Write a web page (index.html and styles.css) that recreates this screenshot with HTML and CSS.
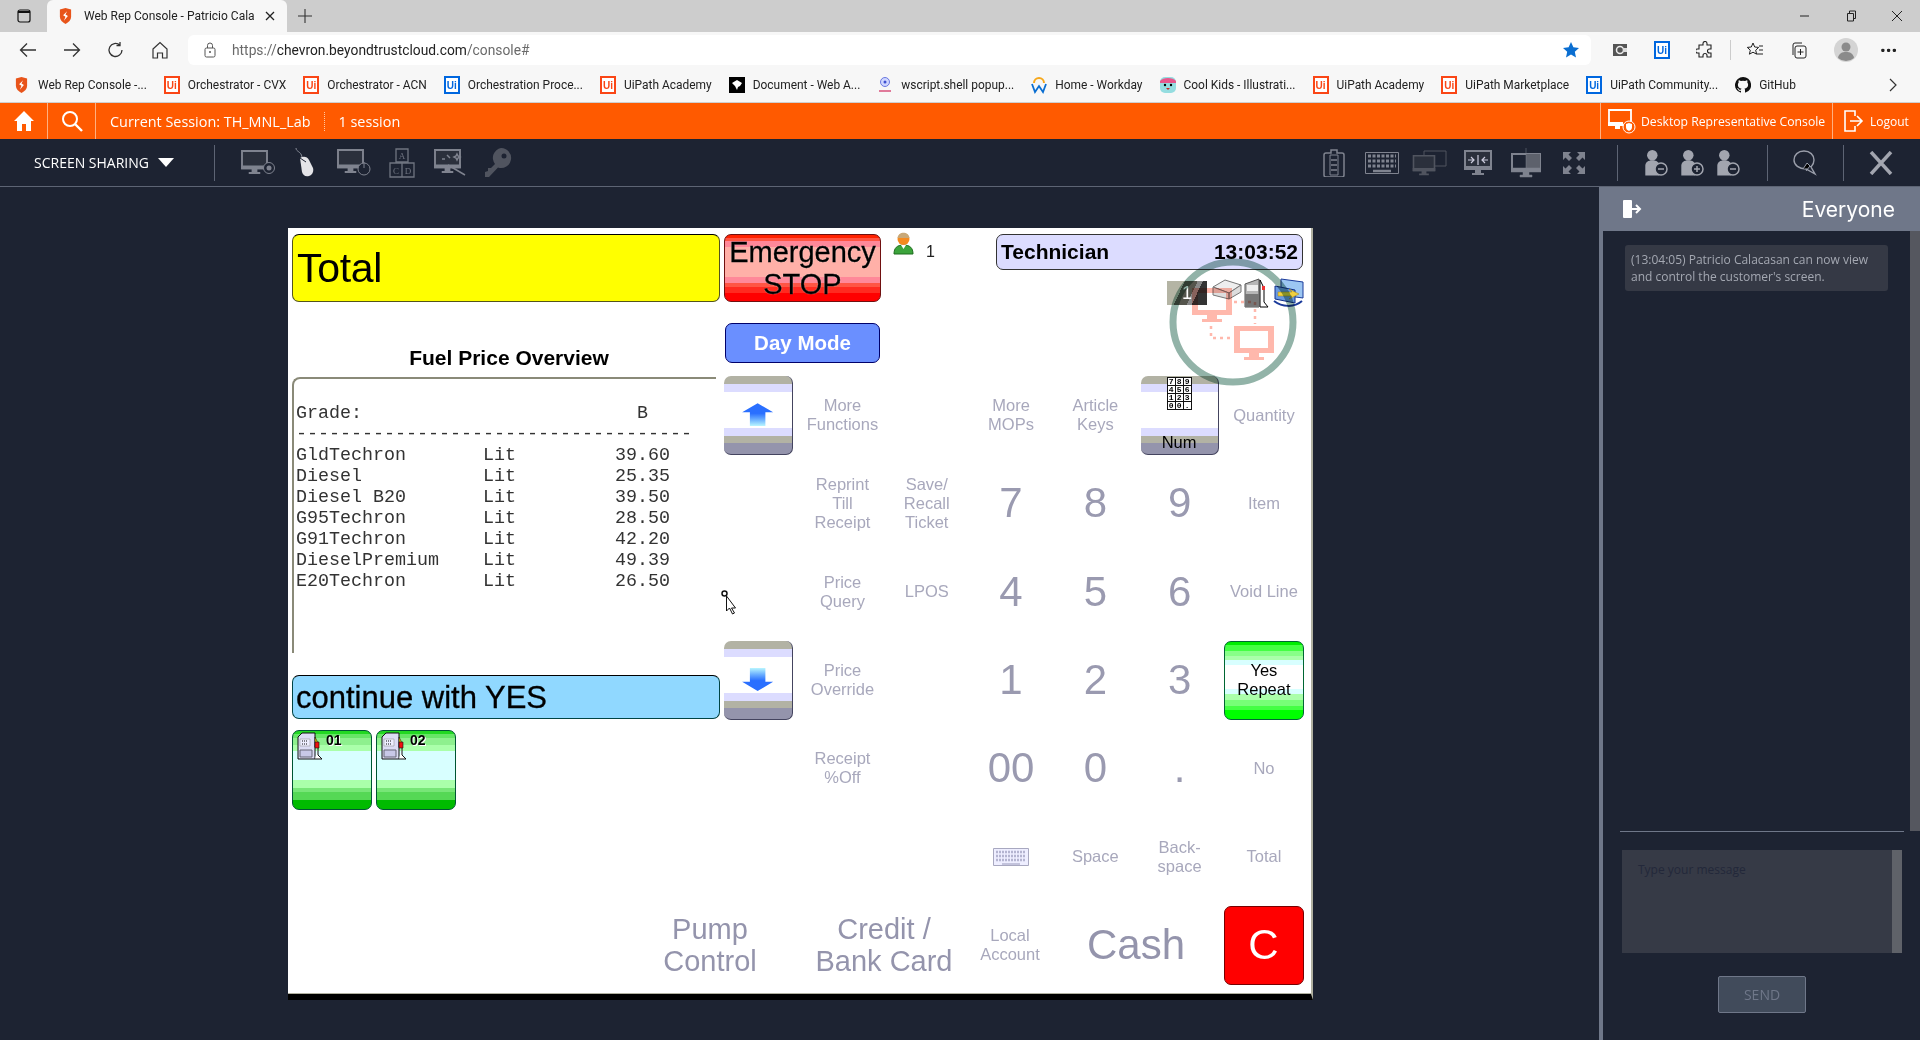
FILE: index.html
```html
<!DOCTYPE html>
<html>
<head>
<meta charset="utf-8">
<title>Web Rep Console</title>
<link rel="stylesheet" href="styles.css">
</head>
<body>

<svg class="defs">
  <symbol id="shield" viewBox="0 0 16 20"><path d="M8 0l7 2v9c0 4-3 7-7 9-4-2-7-5-7-9V2z" fill="#e8541a"/><path d="M10 4L5 9l3 2-2 5 5-6-3-2z" fill="#fff"/></symbol>
  <symbol id="monitor" viewBox="0 0 28 26"><path d="M1 1h26v18H1z" fill="#2b303c" stroke="currentColor" stroke-width="2"/><path d="M0 16h28v4H0zM11 20h6v3h3v2H8v-2h3z" fill="currentColor"/></symbol>
  <symbol id="person" viewBox="0 0 24 40"><circle cx="11" cy="9" r="7.5" fill="currentColor"/><path d="M1 38V24c0-5 4-8 10-8s10 3 10 8v14z" fill="currentColor"/></symbol>
  <symbol id="pump" viewBox="0 0 26 29">
    <path d="M1 5l4-4h13v26H1z" fill="#dcdcf4" stroke="#111"/><path d="M3 7h10v7H3z" fill="#eef" stroke="#888" stroke-width=".5"/>
    <path d="M5 9h5M5 12h5" stroke="#111" stroke-dasharray="1 1"/><path d="M3 18h12v7H3z" fill="#c8c8e8" stroke="#667"/>
    <path d="M18 5l3 6-3 4z" fill="#ffd800" stroke="#111" stroke-width=".6"/><path d="M18 10h4v6h-4z" fill="#f01010" stroke="#111" stroke-width=".6"/>
    <path d="M21 16v7l4 4h-7" fill="#fff" stroke="#111"/>
  </symbol>
</svg>

<div class="tabstrip">
  <svg class="tab-panes" width="14" height="14" viewBox="0 0 14 14"><rect x="1" y="1" width="12" height="12" rx="2" fill="none" stroke="#111" stroke-width="1.2"/><path d="M1 4h12V2H1z" fill="#111"/></svg>
  <div class="tab">
    <svg class="favicon" width="13" height="16"><use href="#shield"/></svg>
    <span class="tab-title">Web Rep Console - Patricio Cala</span>
    <svg class="tab-close" width="10" height="10" viewBox="0 0 10 10"><path d="M1 1l8 8M9 1L1 9" stroke="#222" stroke-width="1.3"/></svg>
  </div>
  <svg class="tab-new" width="14" height="14" viewBox="0 0 14 14"><path d="M7 0v14M0 7h14" stroke="#333" stroke-width="1.1"/></svg>
  <div class="win-btns">
    <svg width="12" height="12" viewBox="0 0 12 12"><path d="M1 6h9" stroke="#222"/></svg>
    <svg width="12" height="12" viewBox="0 0 12 12"><path d="M2.5 3.5h6V11h-6zM4.500 3V1h6v7.500H9" fill="none" stroke="#222"/></svg>
    <svg width="12" height="12" viewBox="0 0 12 12"><path d="M1 1l10 10M11 1L1 11" stroke="#222"/></svg>
  </div>
</div>

<div class="addrbar">
  <button class="nav"><svg width="18" height="16" viewBox="0 0 18 16"><path d="M17 8H2M8 1.5L1.5 8 8 14.5" fill="none" stroke="#333" stroke-width="1.3"/></svg></button>
  <button class="nav"><svg width="18" height="16" viewBox="0 0 18 16"><path d="M1 8h15M10 1.5L16.5 8 10 14.5" fill="none" stroke="#333" stroke-width="1.3"/></svg></button>
  <button class="nav"><svg width="18" height="18" viewBox="0 0 18 18"><path d="M15 9a6.5 6.5 0 1 1-2.200-4.900M13 1v3.500H9.500" fill="none" stroke="#333" stroke-width="1.3"/></svg></button>
  <button class="nav"><svg width="18" height="18" viewBox="0 0 18 18"><path d="M2 8l7-6.500L16 8v9h-4.500v-5h-5v5H2z" fill="none" stroke="#333" stroke-width="1.2"/></svg></button>
  <div class="omnibox">
    <svg class="lock" width="12" height="16" viewBox="0 0 12 16"><rect x="1" y="6" width="10" height="9" rx="1.5" fill="none" stroke="#555"/><path d="M3.5 6V3.500a2.500 2.500 0 0 1 5 0V6" fill="none" stroke="#555"/><circle cx="6" cy="10" r="1" fill="#555"/></svg>
    <span class="url"><i>https://</i>chevron.beyondtrustcloud.com<i>/console#</i></span>
    <svg class="star" width="18" height="18" viewBox="0 0 18 18"><path d="M9 1l2.400 5.300 5.600.6-4.200 3.800 1.200 5.700L9 13.500 4 16.400l1.200-5.700L1 6.900l5.600-.6z" fill="#0a6ed1"/></svg>
  </div>
  <div class="ext-icons">
    <svg width="16" height="18" viewBox="0 0 16 18"><path d="M1 3h14v12H1z" fill="#555"/><circle cx="8" cy="9" r="3.5" fill="none" stroke="#eee" stroke-width="1.5"/><path d="M11 7h4v4h-4z" fill="#ddd"/></svg>
    <span class="ui-logo ui-blue">Ui</span>
    <svg width="18" height="18" viewBox="0 0 18 18"><path d="M7 2.500a2 2 0 0 1 4 0V4h4v4h-1.500a2 2 0 0 0 0 4H15v4h-4v-1.500a2 2 0 0 0-4 0V16H3v-4H1.500a2 2 0 0 1 0-4H3V4h4z" fill="none" stroke="#222" stroke-width="1.1"/></svg>
    <span class="ext-sep"></span>
    <svg width="18" height="18" viewBox="0 0 18 18"><path d="M7 2l1.700 4 4 .4-3 2.800.9 4L7 11.200l-3.600 2 .9-4-3-2.800 4-.4z" fill="none" stroke="#222"/><path d="M13 5h4M13 9h4M11 13h6" stroke="#222"/></svg>
    <svg width="18" height="18" viewBox="0 0 18 18"><rect x="5" y="5" width="11" height="12" rx="2" fill="none" stroke="#222"/><path d="M3 14V4a2 2 0 0 1 2-2h7M10.500 8v6M7.500 11h6" fill="none" stroke="#222"/></svg>
    <svg class="avatar" width="24" height="24" viewBox="0 0 24 24"><circle cx="12" cy="12" r="12" fill="#d4d4d4"/><circle cx="12" cy="9" r="4.5" fill="#8b8b8b"/><path d="M4 20c1-5 4-6 8-6s7 1 8 6a12 12 0 0 1-16 0z" fill="#8b8b8b"/></svg>
    <span class="dots">&middot;&middot;&middot;</span>
  </div>
</div>

<div class="bookmarks">
  <a class="bm bm-first"><svg width="13" height="16"><use href="#shield"/></svg>Web Rep Console -...</a>
  <a class="bm"><span class="ui-logo">Ui</span>Orchestrator - CVX</a>
  <a class="bm"><span class="ui-logo">Ui</span>Orchestrator - ACN</a>
  <a class="bm"><span class="ui-logo ui-blue">Ui</span>Orchestration Proce...</a>
  <a class="bm"><span class="ui-logo">Ui</span>UiPath Academy</a>
  <a class="bm"><svg width="16" height="16" viewBox="0 0 16 16"><path d="M0 0h16v16H0z" fill="#000"/><path d="M3 6l5-3 5 3-2 3-2 1-1 3-2-4z" fill="#fff"/></svg>Document - Web A...</a>
  <a class="bm"><svg width="16" height="18" viewBox="0 0 16 18"><circle cx="8" cy="6" r="4.5" fill="#cfd6ff" stroke="#6a78e0"/><circle cx="8" cy="6" r="1.5" fill="#3d4fd0"/><path d="M2 15h12" stroke="#e07a9a" stroke-width="2"/></svg>wscript.shell popup...</a>
  <a class="bm"><svg width="16" height="18" viewBox="0 0 16 18"><path d="M3 7a5 5 0 0 1 10 0" fill="none" stroke="#f6a81c" stroke-width="2"/><path d="M1 8l3 8 4-6 4 6 3-8" fill="none" stroke="#0a6ed1" stroke-width="1.8"/></svg>Home - Workday</a>
  <a class="bm"><svg width="16" height="18" viewBox="0 0 16 18"><rect y="1" width="16" height="16" rx="5" fill="#95dde0"/><path d="M0 5c3-4 13-4 16 0v2H0z" fill="#e8578c"/><circle cx="5" cy="9" r="1.2"/><circle cx="11" cy="9" r="1.2"/><path d="M6 12h4l-2 2z" fill="#c22"/></svg>Cool Kids - Illustrati...</a>
  <a class="bm"><span class="ui-logo">Ui</span>UiPath Academy</a>
  <a class="bm"><span class="ui-logo">Ui</span>UiPath Marketplace</a>
  <a class="bm"><span class="ui-logo ui-blue">Ui</span>UiPath Community...</a>
  <a class="bm"><svg width="16" height="16" viewBox="0 0 16 16"><path d="M8 0a8 8 0 0 0-2.500 15.600c.4.100.5-.2.500-.4v-1.400c-2.200.5-2.700-1-2.700-1-.4-.9-.9-1.200-.9-1.200-.7-.5.100-.5.100-.5.800.1 1.200.8 1.200.8.700 1.200 1.900.9 2.300.7.100-.5.300-.9.500-1.100-1.800-.2-3.600-.9-3.600-4 0-.9.300-1.600.8-2.100-.1-.2-.4-1 .100-2.100 0 0 .7-.2 2.200.8a7.600 7.600 0 0 1 4 0c1.500-1 2.200-.8 2.200-.8.400 1.100.2 1.900.1 2.100.5.600.8 1.300.8 2.100 0 3.100-1.900 3.800-3.700 4 .3.300.6.800.6 1.500v2.200c0 .2.100.5.600.4A8 8 0 0 0 8 0z" fill="#111"/></svg>GitHub</a>
  <svg class="bm-more" width="10" height="14" viewBox="0 0 10 14"><path d="M2 1l6 6-6 6" fill="none" stroke="#333" stroke-width="1.2"/></svg>
</div>

<div class="orangebar">
  <div class="ob-cell ob-home"><svg width="22" height="22" viewBox="0 0 22 22"><path d="M11 1l10 10h-3v10h-5v-7H9v7H4V11H1z" fill="#fff"/></svg></div>
  <div class="ob-cell ob-search"><svg width="22" height="22" viewBox="0 0 22 22"><circle cx="9" cy="9" r="7" fill="none" stroke="#fff" stroke-width="2"/><path d="M14 14l7 7" stroke="#fff" stroke-width="2.4"/></svg></div>
  <span class="ob-session">Current Session: TH_MNL_Lab</span>
  <span class="ob-count">1 session</span>
  <div class="ob-cell ob-desktop">
    <svg width="28" height="26" viewBox="0 0 28 26"><path d="M1 2h22v15H1z" fill="none" stroke="#fff" stroke-width="1.8"/><path d="M0 14h15v4H0zM7 18h5v3H7z" fill="#fff"/><circle cx="21" cy="19" r="6" fill="#ff5a00" stroke="#fff"/><path d="M21 15l3 1v3c0 2-1 3-3 4-2-1-3-2-3-4v-3z" fill="#fff"/></svg>
    <span>Desktop Representative Console</span>
  </div>
  <div class="ob-cell ob-logout">
    <svg width="20" height="22" viewBox="0 0 20 22"><path d="M11 6V1H1v20h10v-5" fill="none" stroke="#fff" stroke-width="1.6"/><path d="M6 11h12M13 6l5 5-5 5" fill="none" stroke="#fff" stroke-width="1.6"/></svg>
    <span>Logout</span>
  </div>
</div>

<div class="toolbar">
  <div class="tb-mode">SCREEN SHARING<span class="caret"></span></div>
  <span class="tb-sep"></span>
  <div class="tb-group tb-left">
    <span class="tb-icon"><svg width="34" height="26" viewBox="0 0 34 26"><use href="#monitor" width="27" height="25"/><circle cx="28" cy="18" r="5.5" fill="#1d2332" stroke="currentColor"/><circle cx="28" cy="18" r="2.5" fill="currentColor"/></svg></span>
    <span class="tb-icon tb-bright"><svg width="22" height="30" viewBox="0 0 22 30"><path d="M1 0c0 4 5 3 6 9" fill="none" stroke="#8a8e9a"/><path d="M5 10c3-2 7-2 9 2l4 8c1 4-1 7-4 8-4 1-6-1-7-4z" fill="currentColor"/><path d="M5 10l6 4" stroke="#1d2332"/></svg></span>
    <span class="tb-icon"><svg width="34" height="28" viewBox="0 0 34 28"><use href="#monitor" width="27" height="25"/><circle cx="27" cy="20" r="6" fill="#1d2332" stroke="currentColor"/><path d="M27 13v6" stroke="currentColor"/></svg></span>
    <span class="tb-icon tb-mid"><svg class="abcd" width="26" height="30" viewBox="0 0 26 30"><path d="M7 1h12v13H7zM1 15h12v14H1zM13 15h12v14H13z" fill="none" stroke="currentColor" stroke-width="1.3"/><text x="13" y="11" text-anchor="middle">A</text><text x="7" y="26" text-anchor="middle">C</text><text x="19" y="26" text-anchor="middle">D</text></svg></span>
    <span class="tb-icon"><svg width="32" height="28" viewBox="0 0 32 28"><use href="#monitor" width="27" height="25"/><path d="M14 16L31 26M23 5l1 2 2 1-2 1-1 2-1-2-2-1 2-1zM13 6l3 3M8 10h3" stroke="currentColor" stroke-width="1.5" fill="none"/></svg></span>
    <span class="tb-icon tb-dim"><svg width="28" height="30" viewBox="0 0 28 30"><path d="M17 0a10 10 0 1 1-3 19.500L5 29H1v-5l3-1v-3h3l4-4A10 10 0 0 1 17 0z" fill="currentColor"/><circle cx="20" cy="8" r="2.5" fill="#1d2332"/></svg></span>
  </div>
  <div class="tb-group tb-right">
    <span class="tb-icon"><svg width="22" height="28" viewBox="0 0 22 28"><path d="M8 1h6v3h5a2 2 0 0 1 2 2v20a2 2 0 0 1-2 2H3a2 2 0 0 1-2-2V6a2 2 0 0 1 2-2h5z" fill="none" stroke="currentColor" stroke-width="1.5"/><path d="M7 6h8v20H7z" fill="none" stroke="currentColor"/><path d="M8 11h6M8 16h6M8 21h6" stroke="currentColor" stroke-width="1.5"/></svg></span>
    <span class="tb-icon"><svg width="34" height="22" viewBox="0 0 34 22"><path d="M.5.5h33v21H.5z" fill="none" stroke="currentColor"/><path d="M3 4h28M3 9h28M3 14h28" stroke="currentColor" stroke-width="3" stroke-dasharray="3 1.5"/><path d="M8 19h18" stroke="currentColor" stroke-width="2.5"/></svg></span>
    <span class="tb-icon tb-dim"><svg width="36" height="26" viewBox="0 0 36 26"><path d="M12 1h22v15H12z" fill="none" stroke="currentColor"/><use href="#monitor" y="5" width="24" height="21"/></svg></span>
    <span class="tb-icon"><svg width="30" height="26" viewBox="0 0 30 26"><use href="#monitor" width="30" height="26"/><path d="M5 10h6M8 7l3 3-3 3M25 10h-6M22 7l-3 3 3 3M15 5v10" fill="none" stroke="#ccd" stroke-width="1.2"/></svg></span>
    <span class="tb-icon"><svg width="30" height="30" viewBox="0 0 30 30"><path d="M1 6h28v17H1z" fill="none" stroke="currentColor" stroke-width="2"/><path d="M15 6h14v17H15z" fill="#5d616c"/><path d="M0 20h30v4H0zM12 24h6v3h3v2H9v-2h3zM15 0v24" fill="currentColor" stroke="currentColor" stroke-width=".5"/></svg></span>
    <span class="tb-icon"><svg width="22" height="22" viewBox="0 0 22 22"><path id="grow" d="M0 0h8L5.500 2.500 9 6 6 9 2.500 5.500 0 8z" fill="currentColor"/><use href="#grow" transform="rotate(90 11 11)"/><use href="#grow" transform="rotate(180 11 11)"/><use href="#grow" transform="rotate(270 11 11)"/></svg></span>
  </div>
  <span class="tb-sep tb-sep-a"></span>
  <div class="tb-group tb-people">
    <span class="tb-person"><svg width="24" height="28" viewBox="0 0 24 28"><use href="#person" width="18" height="28"/><circle cx="17" cy="20" r="6" fill="#1d2332" stroke="currentColor" stroke-width="1.5"/><path d="M14 20h6" stroke="currentColor" stroke-width="1.5"/></svg></span>
    <span class="tb-person"><svg width="24" height="28" viewBox="0 0 24 28"><use href="#person" width="18" height="28"/><circle cx="17" cy="20" r="6" fill="#1d2332" stroke="currentColor" stroke-width="1.5"/><path d="M14 20h6M17 17v6" stroke="currentColor" stroke-width="1.5"/></svg></span>
    <span class="tb-person"><svg width="24" height="28" viewBox="0 0 24 28"><use href="#person" width="18" height="28"/><circle cx="17" cy="20" r="6" fill="#1d2332" stroke="currentColor" stroke-width="1.5"/><path d="M14 20h6" stroke="currentColor" stroke-width="1.5"/></svg></span>
  </div>
  <span class="tb-sep tb-sep-b"></span>
  <span class="tb-chat"><svg width="24" height="26" viewBox="0 0 24 26"><path d="M11 1c6 0 10 4 10 9 0 3-1 5-3 7l4 7-9-5C6 19 1 15 1 10c0-5 4-9 10-9z" fill="none" stroke="currentColor" stroke-width="1.4"/><path d="M10 19l4-6 4 4M13 21l4-5" stroke="currentColor"/></svg></span>
  <span class="tb-sep tb-sep-c"></span>
  <span class="tb-close"><svg width="24" height="24" viewBox="0 0 24 24"><path d="M2 1l20 22M22 1L2 23" stroke="currentColor" stroke-width="3.5"/></svg></span>
</div>

<div class="workspace">
  <div class="stage">
    <div class="pos">
      <div class="pos-top">
        <div class="pos-left">
          <div class="total-box">Total</div>
          <div class="fuel-title">Fuel Price Overview</div>
<pre class="fuel-panel">
Grade:                         B
------------------------------------
GldTechron       Lit         39.60
Diesel           Lit         25.35
Diesel B20       Lit         39.50
G95Techron       Lit         28.50
G91Techron       Lit         42.20
DieselPremium    Lit         49.39
E20Techron       Lit         26.50
</pre>
          <div class="msg-box">continue with YES</div>
          <div class="pump-row">
            <div class="pump-btn"><svg width="26" height="29"><use href="#pump"/></svg><b>01</b></div>
            <div class="pump-btn"><svg width="26" height="29"><use href="#pump"/></svg><b>02</b></div>
          </div>
        </div>

        <div class="pos-right">
          <div class="right-head">
            <div class="mode-col">
              <div class="stop-btn">Emergency<br>STOP</div>
              <div class="day-btn">Day Mode</div>
            </div>
            <div class="operator">
              <svg width="21" height="24" viewBox="0 0 21 24"><path d="M1 23c0-6 3-9 9.500-9S20 17 20 23z" fill="#3ca43c" stroke="#1c6c1c"/><path d="M8 14h5l-2.500 4z" fill="#fff"/><circle cx="10.500" cy="8" r="6" fill="#f58a1f"/><path d="M4.500 7c1-7 11-7 12 0z" fill="#c8a878"/></svg>
              <span>1</span>
            </div>
            <div class="head-right">
              <div class="tech-bar"><b>Technician</b><b>13:03:52</b></div>
              <div class="status-icons">
                <span class="status-tile">1</span>
                <svg width="30" height="22" viewBox="0 0 30 22"><path d="M1 9l12-7 16 5-12 8z" fill="#eee" stroke="#777"/><path d="M1 9v8l16 4v-6zM17 15v6l12-7V7z" fill="#ddd" stroke="#777"/></svg>
                <svg width="26" height="30" viewBox="0 0 26 30"><path d="M1 6l14-5v28H1z" fill="#b6b6b6" stroke="#555"/><path d="M3 7h11v6H3z" fill="#eee"/><path d="M1 16h14v13H1z" fill="#777"/><path d="M16 2l4 8v14l4 5h-8z" fill="#fff" stroke="#000"/><path d="M18 8h3v4h-3z" fill="#e33"/></svg>
                <svg width="33" height="30" viewBox="0 0 33 30"><path d="M9 1l22 3v16L9 17z" fill="#9cc6f2" stroke="#1a3a9a"/><path d="M3 8l20 4v13L3 21z" fill="#6a9ae2" stroke="#10308a"/><path d="M6 14h14l-3-3 10 5-10 5 3-3H6z" fill="#f0d040" stroke="#a08010" stroke-width=".5"/><path d="M2 23c8 6 20 7 28 0" fill="none" stroke="#1a3a9a" stroke-width="2"/></svg>
              </div>
            </div>
          </div>

          <div class="keys">
            <div class="stripe-btn"><span class="arrow arrow-up"></span></div>
            <div class="key">More<br>Functions</div>
            <div></div>
            <div class="key">More<br>MOPs</div>
            <div class="key">Article<br>Keys</div>
            <div class="stripe-btn num-btn">
              <div class="numpad"><i>7</i><i>8</i><i>9</i><i>4</i><i>5</i><i>6</i><i>1</i><i>2</i><i>3</i><i>0</i><i>0</i><i>.</i></div>
              <span>Num</span>
            </div>
            <div class="key">Quantity</div>

            <div></div>
            <div class="key">Reprint<br>Till<br>Receipt</div>
            <div class="key">Save/<br>Recall<br>Ticket</div>
            <div class="key digit">7</div>
            <div class="key digit">8</div>
            <div class="key digit">9</div>
            <div class="key">Item</div>

            <div class="cursor-cell">
              <svg width="18" height="26" viewBox="0 0 18 26"><circle cx="3.5" cy="3.5" r="2.5" fill="#fff" stroke="#111" stroke-width="1.5"/><path d="M5.500 6v15l3-3 3 6 2-1-3-5h4z" fill="#fff" stroke="#111"/></svg>
            </div>
            <div class="key">Price<br>Query</div>
            <div class="key">LPOS</div>
            <div class="key digit">4</div>
            <div class="key digit">5</div>
            <div class="key digit">6</div>
            <div class="key">Void Line</div>

            <div class="stripe-btn"><span class="arrow arrow-down"></span></div>
            <div class="key">Price<br>Override</div>
            <div></div>
            <div class="key digit">1</div>
            <div class="key digit">2</div>
            <div class="key digit">3</div>
            <div class="yes-btn">Yes<br>Repeat</div>

            <div></div>
            <div class="key">Receipt<br>%Off</div>
            <div></div>
            <div class="key digit">00</div>
            <div class="key digit">0</div>
            <div class="key digit">.</div>
            <div class="key">No</div>

            <div></div>
            <div></div>
            <div></div>
            <div class="key"><svg width="36" height="18" viewBox="0 0 36 18"><path d="M.5.5h35v17H.5z" fill="#eef" stroke="#a8a8c0"/><path d="M3 4h30M3 8h30M3 12h30" stroke="#b4b4d0" stroke-width="2.5" stroke-dasharray="2 1"/><path d="M9 16h18" stroke="#b4b4d0" stroke-width="1.5"/></svg></div>
            <div class="key">Space</div>
            <div class="key">Back-<br>space</div>
            <div class="key">Total</div>
          </div>
        </div>
      </div>

      <div class="pos-bottom">
        <div class="key big pump-ctl">Pump<br>Control</div>
        <div class="key big credit">Credit /<br>Bank Card</div>
        <div class="key">Local<br>Account</div>
        <div class="key cash">Cash</div>
        <div class="c-btn">C</div>
      </div>

      <div class="watermark">
        <svg width="136" height="136" viewBox="0 0 136 136">
          <circle cx="68" cy="68" r="60" fill="none" stroke="#92b3a8" stroke-width="7"/>
          <path d="M27 34h40v27H27zM33 39v17h28V39z" fill="#ffb8ac" fill-rule="evenodd"/><path d="M42 61h10v4h5v3H37v-3h5z" fill="#ffb8ac"/>
          <path d="M69 72h40v27H69zM75 77v17h28V77z" fill="#ffb8ac" fill-rule="evenodd"/><path d="M84 99h10v4h5v3H79v-3h5z" fill="#ffb8ac"/>
          <path d="M46 72v12h20M69 48h21v22" fill="none" stroke="#ffb8ac" stroke-width="2.5" stroke-dasharray="3 4"/>
        </svg>
      </div>
    </div>
  </div>

  <aside class="chat">
    <div class="chat-head">
      <svg width="20" height="20" viewBox="0 0 20 20"><path d="M2 1h7a1 1 0 0 1 1 1v16a1 1 0 0 1-1 1H2a1 1 0 0 1-1-1V2a1 1 0 0 1 1-1z" fill="#fff"/><path d="M10 10h8M14 6l4 4-4 4" fill="none" stroke="#fff" stroke-width="2"/></svg>
      <span>Everyone</span>
    </div>
    <div class="chat-log">
      <div class="chat-msg">(13:04:05) Patricio Calacasan can now view and control the customer's screen.</div>
    </div>
    <div class="chat-compose">
      <div class="chat-input"><span>Type your message</span><i></i></div>
      <div class="chat-send">SEND</div>
    </div>
  </aside>
</div>

</body>
</html>
```

FILE: styles.css
```css
* { box-sizing: border-box; }

html, body { margin: 0; height: 100%; }

body {
  width: 1920px;
  height: 1040px;
  overflow: hidden;
  display: flex;
  flex-direction: column;
  background: #1d2332;
  font-family: "Open Sans", "Liberation Sans", sans-serif;
  color: #222;
}

svg { display: block; flex: none; }
.defs { width: 0; height: 0; position: absolute; }

/* browser chrome */
.tabstrip {
  height: 32px;
  flex: none;
  display: flex;
  align-items: flex-end;
  background: #cdcdcd;
}
.tab-panes { margin: 0 16px 9px 17px; }
.tab {
  width: 240px;
  height: 32px;
  display: flex;
  align-items: center;
  padding: 0 12px;
  background: #f7f7f7;
  border-radius: 6px 6px 0 0;
  font-family: Roboto, sans-serif;
  font-size: 12px;
}
.favicon { margin-right: 12px; }
.tab-title { white-space: nowrap; }
.tab-close { margin-left: auto; }
.tab-new { margin: 0 0 9px 11px; }
.win-btns {
  margin-left: auto;
  display: flex;
  gap: 34px;
  padding-right: 17px;
  margin-bottom: 10px;
}

.addrbar {
  height: 36px;
  flex: none;
  display: flex;
  align-items: center;
  background: #f7f7f7;
}
.nav {
  width: 44px;
  height: 30px;
  padding: 0;
  display: flex;
  align-items: center;
  justify-content: center;
  border: 0;
  background: none;
}
.nav:first-child { margin-left: 6px; }
.omnibox {
  width: 1403px;
  height: 30px;
  margin-left: 6px;
  display: flex;
  align-items: center;
  padding-left: 16px;
  background: #fff;
  border-radius: 6px;
}
.lock { margin-right: 16px; }
.url {
  font-family: Roboto, sans-serif;
  font-size: 13.8px;
  color: #222;
}
.url i { font-style: normal; color: #6a6a6a; }
.star { margin-left: auto; margin-right: 11px; }

.ext-icons {
  display: flex;
  align-items: center;
  margin-left: 21px;
}
.ext-icons > * { margin-right: 26px; }
.ext-sep { width: 1px; height: 20px; background: #ccc; margin: 0 15px 0 -10px; }
.avatar { margin-right: 22px; }
.dots { font-size: 20px; font-weight: 700; line-height: 1; margin: 0; }

.ui-logo {
  width: 16px;
  height: 18px;
  flex: none;
  display: flex;
  align-items: center;
  justify-content: center;
  border: 2px solid #fa4616;
  background: #fff;
  color: #fa4616;
  font-family: "Liberation Sans", sans-serif;
  font-size: 10px;
  font-weight: 700;
}
.ui-blue { border-color: #0067df; color: #0067df; }

.bookmarks {
  height: 35px;
  flex: none;
  display: flex;
  align-items: center;
  gap: 17px;
  padding-left: 15px;
  background: #f7f7f7;
  border-bottom: 1px solid #cfcfcf;
  font-family: Roboto, sans-serif;
  font-size: 11.95px;
  white-space: nowrap;
}
.bm { display: flex; align-items: center; gap: 8px; }
.bm-first { gap: 10px; }
.bm-more { margin-left: auto; margin-right: 22px; }

/* console header */
.orangebar {
  height: 36px;
  flex: none;
  display: flex;
  align-items: center;
  background: #ff5a00;
  color: #fff;
  font-size: 14.4px;
}
.ob-cell {
  height: 36px;
  display: flex;
  align-items: center;
}
.ob-home { width: 48px; padding-left: 13px; border-right: 1px solid #ffb080; }
.ob-search { width: 48px; padding-left: 13px; border-right: 1px solid #ffb080; }
.ob-session { margin-left: 14px; }
.ob-count {
  margin-left: 13px;
  padding-left: 14px;
  border-left: 1px dotted #ffc8a0;
}
.ob-desktop {
  margin-left: auto;
  width: 232px;
  padding-left: 7px;
  gap: 5px;
  border-left: 1px solid #ffb080;
  font-size: 12.2px;
}
.ob-logout {
  width: 88px;
  padding-left: 11px;
  gap: 6px;
  border-left: 1px solid #ffb080;
  font-size: 12px;
}

.toolbar {
  height: 48px;
  flex: none;
  display: flex;
  align-items: center;
  background: #1d2332;
  border-bottom: 1px solid #5d6474;
  color: #9a9eaa;
}
.tb-mode {
  width: 214px;
  padding-left: 34px;
  display: flex;
  align-items: center;
  color: #fff;
  font-size: 14px;
}
.caret {
  margin-left: 9px;
  border-top: 9px solid #fff;
  border-left: 8px solid transparent;
  border-right: 8px solid transparent;
}
.tb-sep { width: 1px; height: 36px; background: #5d6474; flex: none; }
.tb-group { display: flex; align-items: center; }
.tb-left { margin-left: 19px; }
.tb-icon {
  width: 48px;
  display: flex;
  justify-content: center;
  color: #7f838f;
}
.tb-bright { color: #e4e4e8; }
.tb-mid { color: #6f7480; }
.tb-dim { color: #50545f; }
.abcd text { font-family: "Liberation Serif", serif; font-size: 9px; fill: currentColor; }
.tb-right { margin-left: 788px; }
.tb-sep-a { margin-left: 19px; }
.tb-people { margin-left: 26px; gap: 12px; color: #a2a5af; }
.tb-sep-b { margin-left: 27px; }
.tb-chat { margin-left: 25px; color: #9a9eaa; }
.tb-sep-c { margin-left: 26px; }
.tb-close { margin-left: 25px; color: #a2a5af; }

/* remote screen */
.workspace {
  flex: 1;
  display: flex;
  min-height: 0;
}
.stage {
  width: 1599px;
  padding: 41px 0 0 288px;
}

.pos {
  position: relative;
  width: 1025px;
  height: 772px;
  display: flex;
  flex-direction: column;
  background: #fff;
  border-right: 2px solid #b0b0a0;
  border-bottom: 6px solid #000;
  box-shadow: inset 0 -1px 0 #b0b0a0;
  font-family: "Liberation Sans", sans-serif;
}
.pos-top {
  height: 673px;
  flex: none;
  display: flex;
  padding: 6px 0 0 4px;
}
.pos-left { width: 428px; flex: none; }

.total-box {
  height: 68px;
  padding-left: 4px;
  display: flex;
  align-items: center;
  background: #ff0;
  border: 1px solid #55551a;
  border-top-color: #000;
  border-radius: 7px;
  color: #000;
  font-size: 41px;
  letter-spacing: -.3px;
}
.fuel-title {
  margin-top: 44px;
  height: 31px;
  padding-left: 6px;
  text-align: center;
  color: #000;
  font-size: 21px;
  font-weight: 700;
}
.fuel-panel {
  width: 424px;
  height: 276px;
  margin: 0;
  padding: 24px 0 0 2px;
  border-top: 2px solid #8a8a78;
  border-left: 2px solid #8a8a78;
  border-top-left-radius: 8px;
  color: #333;
  font-family: "Liberation Mono", monospace;
  font-size: 18.33px;
  line-height: 21px;
  overflow: hidden;
}
.msg-box {
  height: 44px;
  margin-top: 22px;
  padding: 1px 0 0 3px;
  display: flex;
  align-items: center;
  background: #90d8ff;
  border: 1px solid #044;
  border-top-color: #000;
  border-radius: 7px;
  color: #000;
  font-size: 31px;
  -webkit-text-stroke: .3px #000;
}
.pump-row {
  margin-top: 11px;
  display: flex;
  gap: 4px;
}
.pump-btn {
  width: 80px;
  height: 80px;
  display: flex;
  align-items: flex-start;
  gap: 3px;
  padding: 1px 0 0 4px;
  border: 1px solid #053;
  border-radius: 7px;
  background: linear-gradient(#22d822 0 3px, #66e666 3px 7px, #8ef08e 7px 14px, #aaffaa 14px 20px, #d8ffff 20px 49px, #aaffaa 49px 57px, #77e677 57px 61px, #55d855 61px 69px, #00bb00 69px);
}
.pump-btn b {
  color: #000;
  font-size: 14px;
  text-shadow: 1px 1px 0 #fff;
}

.pos-right {
  width: 587px;
  flex: none;
  margin-left: -3px;
}
.right-head {
  height: 137px;
  display: flex;
}
.mode-col {
  width: 157px;
  margin-left: 7px;
  flex: none;
}
.stop-btn {
  height: 68px;
  padding-top: 1px;
  background: linear-gradient(#ff2200 0 3px, #ff5544 3px 6px, #ff8899 6px 12px, #ffb0a8 12px 42px, #ff8899 42px 48px, #ff5544 48px 52px, #ff2a20 52px 58px, #f00 58px);
  border: 1px solid #701010;
  border-radius: 7px;
  text-align: center;
  color: #000;
  font-size: 29px;
  line-height: 32px;
  -webkit-text-stroke: .3px #000;
  text-shadow: 0 0 1px #fff;
}
.day-btn {
  width: 155px;
  height: 40px;
  margin: 21px 0 0 1px;
  display: flex;
  align-items: center;
  justify-content: center;
  background: #6a8fff;
  border: 1px solid #00006a;
  border-radius: 7px;
  color: #fff;
  font-size: 20.5px;
  font-weight: 700;
}
.operator {
  width: 115px;
  flex: none;
  display: flex;
  gap: 12px;
  padding-left: 12px;
  margin-top: -3px;
  color: #222;
  font-size: 16px;
}
.operator span { line-height: 42px; }
.head-right { width: 307px; flex: none; }
.tech-bar {
  height: 36px;
  display: flex;
  align-items: center;
  justify-content: space-between;
  padding: 0 4px;
  background: #dcdcff;
  border: 1px solid #333;
  border-radius: 7px;
  color: #000;
  font-size: 21px;
}
.status-icons {
  margin-top: 8px;
  width: 309px;
  height: 32px;
  display: flex;
  align-items: flex-start;
  justify-content: flex-end;
  gap: 2px;
}
.status-tile {
  width: 40px;
  height: 24px;
  margin: 3px 3px 0 0;
  display: flex;
  align-items: center;
  justify-content: center;
  background: linear-gradient(115deg, #b4b4a4 0 35%, #55554c 35% 60%, #888 60% 70%, #333 70%);
  color: #fff;
  font-size: 18px;
}

.keys {
  margin-left: -1px;
  display: grid;
  grid-template-columns: repeat(7, 84.3px);
  grid-template-rows: repeat(6, 88.3px);
  align-items: center;
  justify-items: center;
}
.key {
  text-align: center;
  color: #a8a8bc;
  font-size: 16.5px;
  line-height: 19px;
  display: flex;
  justify-content: center;
}
.digit {
  color: #9a9ab0;
  font-size: 42px;
  line-height: 48px;
}
.stripe-btn {
  position: relative;
  width: 69px;
  height: 79px;
  display: flex;
  align-items: center;
  justify-content: center;
  background: linear-gradient(#b2b2a4 0 8px, #dcdcff 8px 16px, #fff 16px 52px, #dcdcff 52px 60px, #b2b2a4 60px 67px, #9494ac 67px);
  border-right: 1px solid #44445f;
  border-bottom: 1px solid #44445f;
  border-radius: 7px;
}
.num-btn {
  width: 78px;
  align-items: stretch;
  flex-direction: column;
  justify-content: space-between;
  color: #000;
  text-align: center;
  font-size: 16.5px;
  line-height: 20px;
}
.num-btn span { margin-bottom: 2px; }
.numpad {
  width: 25px;
  margin: 1px auto 0;
  display: grid;
  grid-template-columns: repeat(3, 7px);
  background: #111;
  gap: 1px;
  padding: 1px;
}
.numpad i {
  height: 7px;
  background: #fff;
  color: #000;
  font-family: "Liberation Mono", monospace;
  font-size: 8px;
  font-style: normal;
  font-weight: 700;
  line-height: 7px;
  text-align: center;
}
.arrow { width: 31px; height: 23px; }
.arrow-up {
  background: linear-gradient(#2a6fff 0 45%, #66aaff 70%, #b8f6ff);
  clip-path: polygon(50% 0, 100% 40%, 75% 40%, 75% 100%, 25% 100%, 25% 40%, 0 40%);
}
.arrow-down {
  background: linear-gradient(#b8f6ff, #66aaff 30%, #2a6fff 55%);
  clip-path: polygon(25% 0, 75% 0, 75% 60%, 100% 60%, 50% 100%, 0 60%, 25% 60%);
}
.cursor-cell { justify-self: start; margin: 22px 0 0 5px; }
.yes-btn {
  width: 80px;
  height: 79px;
  display: flex;
  align-items: center;
  justify-content: center;
  text-align: center;
  background: linear-gradient(#00ee00 0 3px, #44ff44 3px 9px, #88ff88 9px 14px, #aaffaa 14px 18px, #d8ffff 18px 23px, #fff 23px 47px, #d8ffff 47px 52px, #aaffaa 52px 58px, #77ff77 58px 64px, #44ff44 64px 68px, #00ff00 68px);
  border: 1px solid #063;
  border-radius: 7px;
  color: #000;
  font-size: 16.5px;
  line-height: 19px;
}

.pos-bottom {
  margin-left: 344px;
  height: 88px;
  display: grid;
  grid-template-columns: repeat(8, 84px);
  align-items: center;
  justify-items: center;
}
.big {
  color: #9494ac;
  font-size: 29px;
  line-height: 32px;
  grid-column: span 2;
}
.pump-ctl { margin-right: 12px; }
.cash {
  grid-column: span 2;
  color: #9494ac;
  font-size: 42px;
  line-height: 48px;
}
.c-btn {
  width: 80px;
  height: 79px;
  margin-left: 3px;
  display: flex;
  align-items: center;
  justify-content: center;
  background: #f00;
  border: 1px solid #700;
  border-radius: 7px;
  color: #fff;
  font-size: 42px;
}

.watermark {
  position: absolute;
  left: 877px;
  top: 26px;
  mix-blend-mode: multiply;
}

/* chat */
.chat {
  width: 321px;
  flex: none;
  display: flex;
  flex-direction: column;
  border-left: 4px solid #6f7789;
}
.chat-head {
  height: 44px;
  flex: none;
  display: flex;
  align-items: center;
  justify-content: space-between;
  padding: 0 25px 0 19px;
  background: #6f7789;
  color: #fff;
  font-family: Inter, sans-serif;
  font-size: 21px;
}
.chat-log {
  height: 600px;
  flex: none;
  padding: 14px 32px 0 22px;
  box-shadow: inset -10px 0 0 #55575f;
}
.chat-msg {
  padding: 6px 6px;
  height: 46px;
  background: #353945;
  border-radius: 3px;
  color: #a4a8b2;
  font-size: 12px;
  line-height: 17px;
}
.chat-compose {
  margin: 0 16px 0 17px;
  padding: 18px 0 0 2px;
  border-top: 1px solid #6f7789;
}
.chat-input {
  position: relative;
  width: 280px;
  height: 103px;
  padding: 11px 16px;
  background: #363a46;
  color: #23283a;
  font-size: 12px;
}
.chat-input i {
  position: absolute;
  right: 0;
  top: 0;
  width: 10px;
  height: 103px;
  background: #5f6269;
}
.chat-send {
  width: 88px;
  height: 37px;
  margin: 23px 0 0 96px;
  display: flex;
  align-items: center;
  justify-content: center;
  background: #414b5b;
  border: 1px solid #6f7789;
  border-radius: 2px;
  color: #6f7789;
  font-size: 14px;
}
```
